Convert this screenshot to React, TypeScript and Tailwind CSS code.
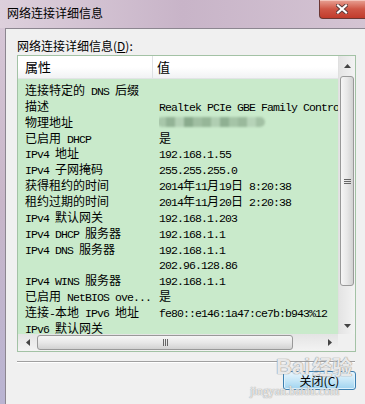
import React from "react";

const CJK = /([\u3400-\u9fff\uff00-\uffef]+)/;

// SimSun-like mix: CJK at 12px, Latin half-width (6px per char)
function Mixed({ text }: { text: string }) {
    const parts = text.split(CJK).filter(Boolean);
    return (
        <>
            {parts.map((p, i) =>
                /[\u3400-\u9fff]/.test(p) ? (
                    <span key={i}>{p}</span>
                ) : (
                    <span key={i} className="font-['Liberation_Mono',monospace] text-[11.5px] tracking-[-0.9px] whitespace-pre">
                        {p}
                    </span>
                )
            )}
        </>
    );
}

const BLUR = "__blur__";

const rows: [string, string][] = [
    ["连接特定的 DNS 后缀", ""],
    ["描述", "Realtek PCIe GBE Family Controller"],
    ["物理地址", BLUR],
    ["已启用 DHCP", "是"],
    ["IPv4 地址", "192.168.1.55"],
    ["IPv4 子网掩码", "255.255.255.0"],
    ["获得租约的时间", "2014年11月19日 8:20:38"],
    ["租约过期的时间", "2014年11月20日 2:20:38"],
    ["IPv4 默认网关", "192.168.1.203"],
    ["IPv4 DHCP 服务器", "192.168.1.1"],
    ["IPv4 DNS 服务器", "192.168.1.1"],
    ["", "202.96.128.86"],
    ["IPv4 WINS 服务器", "192.168.1.1"],
    ["已启用 NetBIOS ove...", "是"],
    ["连接-本地 IPv6 地址", "fe80::e146:1a47:ce7b:b943%12"],
    ["IPv6 默认网关", ""],
];

const blurBlocks = ["#a8c7aa", "#93b396", "#b3d0b5", "#8aab8d", "#a0bfa2", "#96b698", "#b0ceb2", "#8fb092", "#a5c4a7", "#9ab99c", "#b6d3b8", "#a2c1a4"];

function BlurredMac() {
    return (
        <div className="flex h-[10px] w-[108px] mt-[3px] -ml-[2px] blur-[1.2px] rounded-full overflow-hidden">
            {blurBlocks.map((c, i) => (
                <div key={i} className="flex-1 h-full" style={{ backgroundColor: c }} />
            ))}
        </div>
    );
}

function CloseButton() {
    return (
        <div className="ml-auto w-[46px] h-[19px] shrink-0 rounded-bl-[4px] border-l border-b border-[#6b3733] bg-gradient-to-b from-[#e7a195] via-[#cf5646] to-[#c13b2c] flex items-center justify-center pr-[2px] shadow-[inset_0_1px_0_#f3c4bb]">
            <svg width="12" height="10" viewBox="0 0 12 10">
                <path d="M2 1.5 L10 8.5 M10 1.5 L2 8.5" stroke="#5b3a3a" strokeWidth="4" strokeLinecap="square" />
                <path d="M2 1.5 L10 8.5 M10 1.5 L2 8.5" stroke="#ffffff" strokeWidth="2.2" strokeLinecap="square" />
            </svg>
        </div>
    );
}

function VScroll() {
    return (
        <div className="flex flex-col h-full bg-gradient-to-r from-[#e4e4e4] to-[#f3f3f3] border-l border-[#e0e0e0]">
            <div className="h-[20px] flex items-center justify-center">
                <svg width="7" height="4"><path d="M3.5 0 L7 4 L0 4Z" fill="#444" /></svg>
            </div>
            <div className="h-[210px] mx-[1px] rounded-[3px] border border-[#999] bg-gradient-to-r from-[#f6f6f6] via-[#e8e8e8] to-[#d2d2d2] flex flex-col items-center justify-center gap-[1px]">
                <div className="w-[7px] h-px bg-[#666]" />
                <div className="w-[7px] h-px bg-[#666]" />
                <div className="w-[7px] h-px bg-[#666]" />
            </div>
            <div className="flex-1" />
            <div className="h-[17px] flex items-center justify-center">
                <svg width="7" height="4"><path d="M0 0 L7 0 L3.5 4Z" fill="#444" /></svg>
            </div>
        </div>
    );
}

function HScroll() {
    return (
        <div className="flex h-full bg-gradient-to-b from-[#e4e4e4] to-[#f3f3f3]">
            <div className="w-[19px] flex items-center justify-center">
                <svg width="4" height="7"><path d="M0 3.5 L4 0 L4 7Z" fill="#444" /></svg>
            </div>
            <div className="w-[256px] my-[1px] rounded-[3px] border border-[#999] bg-gradient-to-b from-[#f6f6f6] via-[#e8e8e8] to-[#d2d2d2] flex items-center justify-center gap-[1px]">
                <div className="w-px h-[7px] bg-[#666]" />
                <div className="w-px h-[7px] bg-[#666]" />
                <div className="w-px h-[7px] bg-[#666]" />
            </div>
            <div className="flex-1" />
            <div className="w-[17px] flex items-center justify-center">
                <svg width="4" height="7"><path d="M0 0 L4 3.5 L0 7Z" fill="#444" /></svg>
            </div>
        </div>
    );
}

export default function App() {
    return (
        <div className="w-[365px] h-[404px] overflow-hidden flex flex-col bg-gradient-to-b from-[#d8c9d8] via-[#c8b6c9] to-[#b9b4d2] font-['Noto_Sans_CJK_SC',sans-serif] text-black">
            {/* title bar */}
            <div className="h-[28px] shrink-0 flex items-start bg-gradient-to-r from-[#ddd0dc] via-[#c8b4c8] to-[#d4c4d3]">
                <div className="pl-[7px] pt-[5px] text-[12px] leading-[16px]">网络连接详细信息</div>
                <CloseButton />
            </div>

            {/* body */}
            <div className="relative flex-1 ml-[5px] border-l border-t border-[#8c8690] bg-[#f0f0f0] flex flex-col pl-[11px] pr-[9px] pt-[9px]">
                <div className="h-[16px] text-[12px] leading-[16px]">
                    网络连接详细信息(<span className="underline">D</span>):
                </div>

                <div className="mt-[1px] w-[339px] h-[297px] border border-[#a3c2a5] grid grid-cols-[1fr_17px] grid-rows-[1fr_17px]">
                    <div className="flex flex-col overflow-hidden bg-[#c9eacb]">
                        <div className="h-[23px] shrink-0 flex bg-gradient-to-b from-white via-white to-[#f1f2f4] border-b border-[#e2e4e6] text-[13px] leading-[22px]">
                            <div className="w-[135px] pl-[7px] border-r border-[#dfe1e4]">属性</div>
                            <div className="pl-[4px]">值</div>
                        </div>
                        <div className="pt-[3px] text-[12px] leading-[16px]">
                            {rows.map(([k, v], i) => (
                                <div key={i} className="h-[15.87px] grid grid-cols-[141px_1fr] whitespace-nowrap">
                                    <div className="pl-[7px] overflow-hidden">
                                        <Mixed text={k} />
                                    </div>
                                    <div className="overflow-hidden">
                                        {v === BLUR ? <BlurredMac /> : <Mixed text={v} />}
                                    </div>
                                </div>
                            ))}
                        </div>
                    </div>
                    <div className="row-span-1">
                        <VScroll />
                    </div>
                    <HScroll />
                    <div className="bg-[#f0f0f0]" />
                </div>

                <div className="mt-[9px] w-[338px] h-px bg-[#a0a0a0]" />
                <div className="w-[338px] h-px bg-white" />

                <button className="self-end mt-[8px] w-[73px] h-[19px] rounded-[3px] border border-[#3c7fb1] bg-gradient-to-b from-[#eaf6fd] via-[#c6e6f7] to-[#9fd3f0] shadow-[inset_0_0_0_1px_#dff2fc] text-[12px] leading-[16px]">
                    关闭(C)
                </button>

                {/* watermark */}
                <div className="absolute left-[270px] top-[326px] pointer-events-none flex items-end gap-[2px] text-white/80 [text-shadow:0_0_1px_#8a8a8a,0_0_1px_#8a8a8a]">
                    <span className="font-['Liberation_Sans',sans-serif] font-bold text-[22px] leading-[24px]">Bai</span>
                    <span className="text-[20px] leading-[24px] font-bold">经验</span>
                </div>
                <div className="absolute left-[244px] top-[355px] pointer-events-none font-['Liberation_Serif',serif] text-[12px] leading-[14px] text-white/80 [text-shadow:0_0_1px_#9a9a9a,0_0_1px_#9a9a9a]">
                    jingyan.baidu.com
                </div>
            </div>
        </div>
    );
}
